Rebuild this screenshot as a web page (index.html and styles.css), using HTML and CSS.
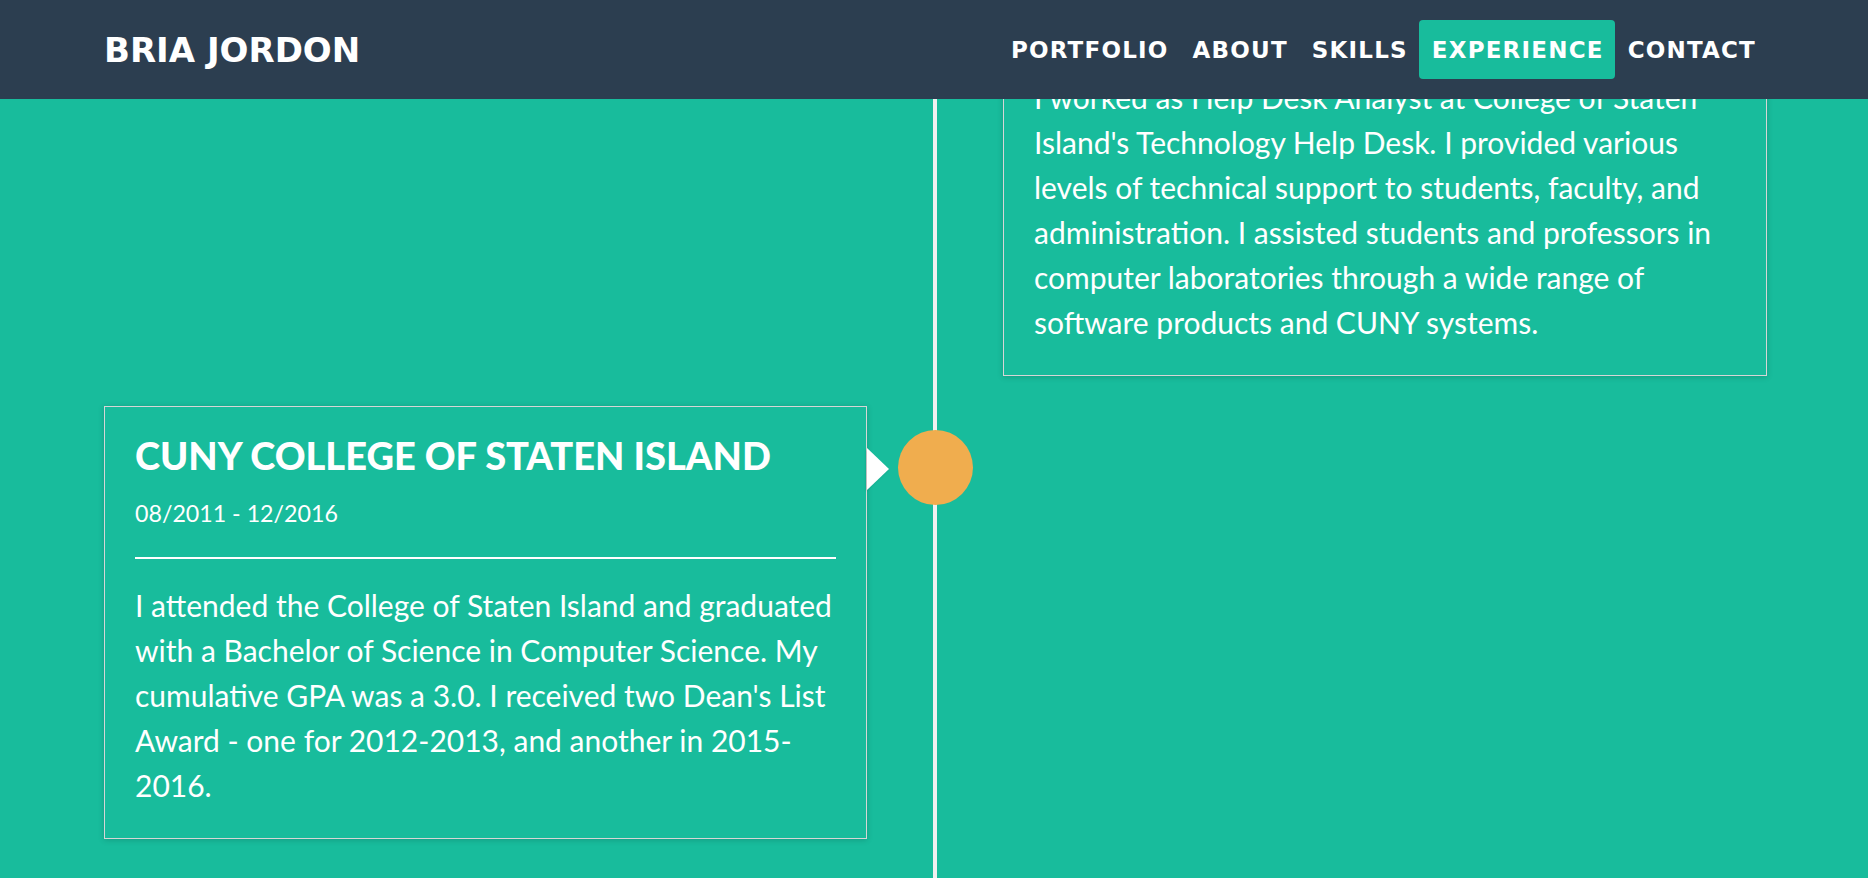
FILE: index.html
```html
<!DOCTYPE html>
<html lang="en">
<head>
<meta charset="utf-8">
<title>Bria Jordon - Experience</title>
<link rel="stylesheet" href="styles.css">
</head>
<body>
<header class="navbar">
  <a class="brand" href="#">Bria Jordon</a>
  <nav>
    <ul class="nav-links">
      <li><a href="#">Portfolio</a></li>
      <li><a href="#">About</a></li>
      <li><a href="#">Skills</a></li>
      <li class="active"><a href="#">Experience</a></li>
      <li><a href="#">Contact</a></li>
    </ul>
  </nav>
</header>

<main class="timeline">
  <div class="marker marker-1"></div>
  <article class="card card-right row-1">
    <h3 class="card-title">Help Desk Analyst</h3>
    <p class="card-date">01/2013 - 12/2016</p>
    <hr class="card-rule">
    <p class="card-text">I worked as Help Desk Analyst at College of Staten Island's Technology Help Desk. I provided various levels of technical support to students, faculty, and administration. I assisted students and professors in computer laboratories through a wide range of software products and CUNY systems.</p>
  </article>

  <article class="card card-left row-2">
    <h3 class="card-title">CUNY College of Staten Island</h3>
    <p class="card-date">08/2011 - 12/2016</p>
    <hr class="card-rule">
    <p class="card-text">I attended the College of Staten Island and graduated with a Bachelor of Science in Computer Science. My cumulative GPA was a 3.0. I received two Dean's List Award - one for 2012-2013, and another in 2015-2016.</p>
  </article>
  <div class="marker marker-2"></div>
</main>
</body>
</html>
```

FILE: styles.css
```css
html, body {
  margin: 0;
  padding: 0;
}

body {
  background: #18bc9c;
  color: #ffffff;
  font-family: "Lato", "Liberation Sans", sans-serif;
}

/* ---------- navbar ---------- */
.navbar {
  position: fixed;
  top: 0;
  left: 0;
  right: 0;
  z-index: 10;
  height: 99px;
  background: #2c3e50;
  display: flex;
  align-items: center;
  justify-content: space-between;
  padding: 0 101px 0 104px;
  box-sizing: border-box;
}

.brand {
  font-family: "DejaVu Sans", sans-serif;
  font-weight: 700;
  font-size: 34px;
  text-transform: uppercase;
  color: #ffffff;
  text-decoration: none;
  line-height: 1;
}

.nav-links {
  list-style: none;
  margin: 0;
  padding: 0;
  display: flex;
  align-items: center;
}

.nav-links li a {
  display: flex;
  align-items: center;
  height: 59px;
  padding: 0 11px 0 13px;
  border-radius: 4px;
  font-family: "DejaVu Sans", sans-serif;
  font-weight: 700;
  font-size: 23px;
  letter-spacing: 1.2px;
  text-transform: uppercase;
  color: #ffffff;
  text-decoration: none;
}

.nav-links li.active a {
  background: #18bc9c;
}

/* ---------- timeline ---------- */
.timeline {
  position: relative;
  box-sizing: border-box;
  min-height: 980px;
  margin-top: -102px;
  padding: 0 101px 0 104px;
  display: grid;
  grid-template-columns: 763px 136px 1fr;
  grid-template-rows: auto auto 1fr;
  row-gap: 30px;
}

.timeline::before {
  content: "";
  position: absolute;
  top: 0;
  bottom: 0;
  left: 933px;
  width: 4px;
  background: #f0f0f0;
}

.row-1 { grid-row: 1; }
.row-2 { grid-row: 2; }

.marker {
  grid-column: 2;
  justify-self: center;
  align-self: start;
  width: 75px;
  height: 75px;
  margin-top: 24px;
  border-radius: 50%;
  background: #f0ad4e;
  position: relative;
  z-index: 1;
}

.marker-1 { grid-row: 1; }
.marker-2 { grid-row: 2; }

.card {
  position: relative;
  border: 1px solid #d6d6d6;
  box-shadow: 0 1px 6px rgba(0, 0, 0, 0.175);
  padding: 30px;
}

.card-left { grid-column: 1; }
.card-right { grid-column: 3; }

.card-left::after {
  content: "";
  position: absolute;
  top: 41px;
  right: -23px;
  border-top: 21px solid transparent;
  border-bottom: 21px solid transparent;
  border-left: 22px solid #ffffff;
  filter: drop-shadow(-1px 1px 1px rgba(0, 0, 0, 0.15));
}

.card-right::after {
  content: "";
  position: absolute;
  top: 41px;
  left: -23px;
  border-top: 21px solid transparent;
  border-bottom: 21px solid transparent;
  border-right: 22px solid #ffffff;
}

.card-title {
  margin: 0;
  font-family: "Lato", sans-serif;
  font-weight: 900;
  font-size: 38px;
  line-height: 37px;
  text-transform: uppercase;
  color: #ffffff;
}

.card-date {
  margin: 24px 0 0;
  font-size: 23.2px;
  line-height: 30px;
}

.card-rule {
  margin: 29px 0 0;
  border: 0;
  height: 2px;
  background: #ffffff;
}

.card-text {
  margin: 24px 0 0;
  font-size: 30px;
  line-height: 45px;
}
```
